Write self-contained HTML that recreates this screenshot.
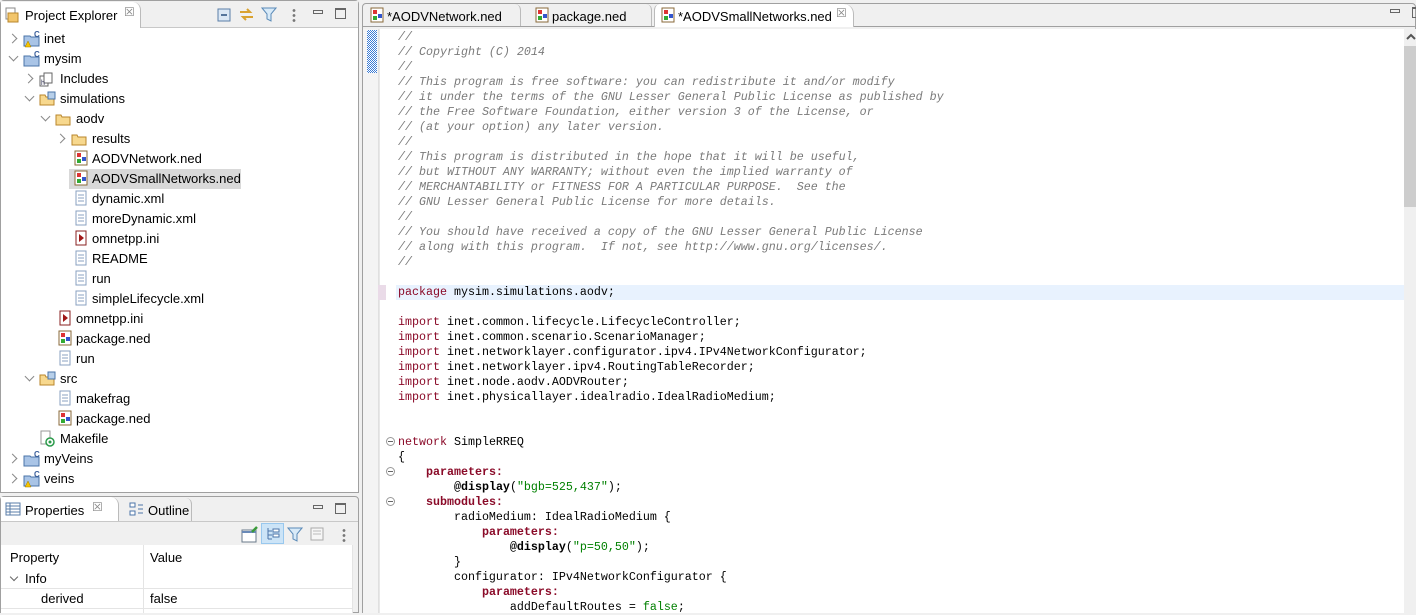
<!DOCTYPE html>
<html><head><meta charset="utf-8"><style>
*{margin:0;padding:0;box-sizing:border-box}
body{width:1416px;height:613px;overflow:hidden;background:#f0f0f0;font-family:"Liberation Sans","Noto Sans CJK SC",sans-serif;font-size:13px;color:#000;position:relative}
.abs{position:absolute}
.row{position:absolute;height:20px;line-height:22px;white-space:nowrap}
.chev{position:absolute;width:7px;height:7px;border-right:1.5px solid #888;border-bottom:1.5px solid #888}
.code{position:absolute;left:398px;top:30px;font-family:"Liberation Mono",monospace;font-size:11.67px;line-height:15px;white-space:pre;color:#000}
.c{color:#7a7a7a;font-style:italic}
.k{color:#8a0a28;font-weight:bold}
.kn{color:#8a0a28}
.s{color:#008000}
.fold{position:absolute;left:386px;width:9px;height:9px;border:1px solid #999;border-radius:50%;background:#fff}
.fold:after{content:"";position:absolute;left:1px;top:3px;width:5px;height:1px;background:#666}
</style></head><body>

<!-- Left project explorer -->
<div class="abs" style="left:0;top:0;width:359px;height:493px;border:1px solid #a0a0a0;border-radius:4px 4px 0 0;background:#fff"></div>
<div class="abs" style="left:1px;top:1px;width:357px;height:27px;background:#f0f0f0;border-bottom:1px solid #c8c8c8"></div>
<div class="abs" style="left:1px;top:2px;width:140px;height:26px;background:#fff;border-right:1px solid #bbb;border-radius:0 8px 0 0"></div>
<svg class="abs" style="left:5px;top:7px" width="16" height="16"><rect x="1" y="1" width="9" height="11" fill="#fff" stroke="#888"/><path d="M3 6h10v9H3z" fill="#f2c56b" stroke="#b8862b"/></svg>
<div class="abs" style="left:25px;top:8px;line-height:16px">Project Explorer</div>
<div class="abs" style="left:124px;top:5px;color:#888;font-size:12px">&#x2612;</div>
<svg class="abs" style="left:216px;top:7px" width="16" height="16"><rect x="2" y="2" width="12" height="12" fill="#dce8f5" stroke="#5a7ea8"/><path d="M5 8h6" stroke="#2a4f7f" stroke-width="1.5"/></svg>
<svg class="abs" style="left:238px;top:6px" width="18" height="18"><path d="M2 6h10l-3-3M15 11H5l3 3" stroke="#d9a230" stroke-width="2" fill="none"/></svg>
<svg class="abs" style="left:261px;top:6px" width="16" height="16"><path d="M1 2h14l-5 6v7l-4-2V8z" fill="#d8eaf8" stroke="#5a8ab8"/></svg>
<div class="abs" style="left:292px;top:8px;width:4px;height:14px;background:radial-gradient(circle,#777 1.2px,transparent 1.6px) 0 0/4px 5px"></div>
<div class="abs" style="left:313px;top:10px;width:10px;height:4px;border:1px solid #666"></div>
<div class="abs" style="left:335px;top:8px;width:11px;height:11px;border:1px solid #666;border-top-width:2px"></div>

<!-- tree -->
<div class="chev" style="left:9px;top:35px;transform:rotate(-45deg)"></div>
<svg class="abs" style="left:23px;top:30px" width="18" height="18"><path d="M1 6h6l1 1h8v9H1z" fill="#a9c4e6" stroke="#4b74a8"/><text x="11" y="7" font-size="8" fill="#3a5f9a" font-weight="bold" font-family="Liberation Sans">C</text><path d="M2 17l3-6 3 6z" fill="#f5c400" stroke="#a07a00" stroke-width=".5"/></svg>
<div class="row" style="left:44px;top:28px">inet</div>
<div class="chev" style="left:10px;top:53px;transform:rotate(45deg)"></div>
<svg class="abs" style="left:23px;top:50px" width="18" height="18"><path d="M1 6h6l1 1h8v9H1z" fill="#a9c4e6" stroke="#4b74a8"/><text x="11" y="7" font-size="8" fill="#3a5f9a" font-weight="bold" font-family="Liberation Sans">C</text></svg>
<div class="row" style="left:44px;top:48px">mysim</div>
<div class="chev" style="left:25px;top:75px;transform:rotate(-45deg)"></div>
<svg class="abs" style="left:39px;top:70px" width="17" height="17"><rect x="1" y="6" width="8" height="10" fill="#fff" stroke="#666"/><rect x="5" y="3" width="8" height="10" fill="#fff" stroke="#666"/><text x="2" y="15" font-size="7" font-family="Liberation Sans" fill="#335">h</text></svg>
<div class="row" style="left:60px;top:68px">Includes</div>
<div class="chev" style="left:26px;top:93px;transform:rotate(45deg)"></div>
<svg class="abs" style="left:39px;top:90px" width="18" height="18"><path d="M1 5h5l1 2h8v8H1z" fill="#f7d88e" stroke="#b8862b"/><rect x="9" y="2" width="7" height="7" fill="#b7cfe9" stroke="#4b74a8"/></svg>
<div class="row" style="left:60px;top:88px">simulations</div>
<div class="chev" style="left:42px;top:113px;transform:rotate(45deg)"></div>
<svg class="abs" style="left:55px;top:110px" width="18" height="18"><path d="M1 5h5l1 2h8v8H1z" fill="#f7d88e" stroke="#b8862b"/></svg>
<div class="row" style="left:76px;top:108px">aodv</div>
<div class="chev" style="left:57px;top:135px;transform:rotate(-45deg)"></div>
<svg class="abs" style="left:71px;top:130px" width="18" height="18"><path d="M1 5h5l1 2h8v8H1z" fill="#f7d88e" stroke="#b8862b"/></svg>
<div class="row" style="left:92px;top:128px">results</div>
<div class="abs" style="left:69px;top:169px;width:172px;height:20px;background:#d9d9d9"></div>
<div class="row" style="left:92px;top:148px">AODVNetwork.ned</div>
<div class="row" style="left:92px;top:168px">AODVSmallNetworks.ned</div>
<div class="row" style="left:92px;top:188px">dynamic.xml</div>
<div class="row" style="left:92px;top:208px">moreDynamic.xml</div>
<div class="row" style="left:92px;top:228px">omnetpp.ini</div>
<div class="row" style="left:92px;top:248px">README</div>
<div class="row" style="left:92px;top:268px">run</div>
<div class="row" style="left:92px;top:288px">simpleLifecycle.xml</div>
<div class="row" style="left:76px;top:308px">omnetpp.ini</div>
<div class="row" style="left:76px;top:328px">package.ned</div>
<div class="row" style="left:76px;top:348px">run</div>
<div class="chev" style="left:26px;top:373px;transform:rotate(45deg)"></div>
<svg class="abs" style="left:39px;top:370px" width="18" height="18"><path d="M1 5h5l1 2h8v8H1z" fill="#f7d88e" stroke="#b8862b"/><rect x="9" y="2" width="7" height="7" fill="#b7cfe9" stroke="#4b74a8"/></svg>
<div class="row" style="left:60px;top:368px">src</div>
<div class="row" style="left:76px;top:388px">makefrag</div>
<div class="row" style="left:76px;top:408px">package.ned</div>
<svg class="abs" style="left:39px;top:430px" width="18" height="18"><rect x="2" y="1" width="9" height="13" fill="#fff" stroke="#999"/><circle cx="11" cy="12" r="4" fill="#fff" stroke="#2a9a4a" stroke-width="1.5"/><circle cx="11" cy="12" r="1.5" fill="#2a9a4a"/></svg>
<div class="row" style="left:60px;top:428px">Makefile</div>
<div class="chev" style="left:9px;top:455px;transform:rotate(-45deg)"></div>
<svg class="abs" style="left:23px;top:450px" width="18" height="18"><path d="M1 6h6l1 1h8v9H1z" fill="#a9c4e6" stroke="#4b74a8"/><text x="11" y="7" font-size="8" fill="#3a5f9a" font-weight="bold" font-family="Liberation Sans">C</text></svg>
<div class="row" style="left:44px;top:448px">myVeins</div>
<div class="chev" style="left:9px;top:475px;transform:rotate(-45deg)"></div>
<svg class="abs" style="left:23px;top:470px" width="18" height="18"><path d="M1 6h6l1 1h8v9H1z" fill="#a9c4e6" stroke="#4b74a8"/><text x="11" y="7" font-size="8" fill="#3a5f9a" font-weight="bold" font-family="Liberation Sans">C</text><path d="M2 17l3-6 3 6z" fill="#f5c400" stroke="#a07a00" stroke-width=".5"/></svg>
<div class="row" style="left:44px;top:468px">veins</div>

<!-- file icons -->
<svg width="0" height="0" style="position:absolute"><defs>
<g id="ned"><rect x="2" y="1" width="12" height="14" fill="#fff" stroke="#8a6a3a"/><rect x="4" y="3" width="4" height="4" fill="#d33"/><rect x="4" y="9" width="4" height="4" fill="#3a3"/><rect x="9" y="7" width="4" height="4" fill="#35c"/></g>
<g id="txt"><rect x="3" y="1" width="10" height="14" fill="#fff" stroke="#8aa0c0"/><path d="M5 5h6M5 8h6M5 11h6" stroke="#8aa0c0"/></g>
<g id="ini"><rect x="3" y="1" width="10" height="14" fill="#fff" stroke="#8a2020"/><path d="M6 4l5 4-5 4z" fill="#a01818"/></g>
</defs></svg>
<svg class="abs" style="left:73px;top:150px" width="16" height="16"><use href="#ned"/></svg>
<svg class="abs" style="left:73px;top:170px" width="16" height="16"><use href="#ned"/></svg>
<svg class="abs" style="left:73px;top:190px" width="16" height="16"><use href="#txt"/></svg>
<svg class="abs" style="left:73px;top:210px" width="16" height="16"><use href="#txt"/></svg>
<svg class="abs" style="left:73px;top:230px" width="16" height="16"><use href="#ini"/></svg>
<svg class="abs" style="left:73px;top:250px" width="16" height="16"><use href="#txt"/></svg>
<svg class="abs" style="left:73px;top:270px" width="16" height="16"><use href="#txt"/></svg>
<svg class="abs" style="left:73px;top:290px" width="16" height="16"><use href="#txt"/></svg>
<svg class="abs" style="left:57px;top:310px" width="16" height="16"><use href="#ini"/></svg>
<svg class="abs" style="left:57px;top:330px" width="16" height="16"><use href="#ned"/></svg>
<svg class="abs" style="left:57px;top:350px" width="16" height="16"><use href="#txt"/></svg>
<svg class="abs" style="left:57px;top:390px" width="16" height="16"><use href="#txt"/></svg>
<svg class="abs" style="left:57px;top:410px" width="16" height="16"><use href="#ned"/></svg>

<!-- Properties panel -->
<div class="abs" style="left:0;top:496px;width:359px;height:117px;border:1px solid #a0a0a0;border-radius:4px 4px 0 0;background:#f0f0f0"></div>
<div class="abs" style="left:1px;top:497px;width:118px;height:24px;background:#fff;border-right:1px solid #bbb;border-radius:0 8px 0 0"></div>
<div class="abs" style="left:120px;top:498px;width:72px;height:23px;border-right:1px solid #bbb;border-radius:0 6px 0 0"></div>
<div class="abs" style="left:1px;top:521px;width:357px;height:1px;background:#c8c8c8"></div>
<svg class="abs" style="left:5px;top:502px" width="16" height="14"><rect x="1" y="1" width="14" height="12" fill="#fff" stroke="#5a7ea8"/><path d="M1 4h14M1 7h14M1 10h14M5 1v12" stroke="#5a7ea8"/></svg>
<div class="abs" style="left:25px;top:503px;line-height:16px">Properties</div>
<div class="abs" style="left:92px;top:500px;color:#888;font-size:12px">&#x2612;</div>
<svg class="abs" style="left:129px;top:502px" width="16" height="16"><rect x="1" y="1" width="5" height="4" fill="#fff" stroke="#4b74a8"/><rect x="1" y="9" width="5" height="4" fill="#fff" stroke="#4b74a8"/><path d="M9 3h5M9 7h5M9 11h5" stroke="#4b74a8"/></svg>
<div class="abs" style="left:148px;top:503px;line-height:16px">Outline</div>
<div class="abs" style="left:313px;top:505px;width:10px;height:4px;border:1px solid #666"></div>
<div class="abs" style="left:335px;top:503px;width:11px;height:11px;border:1px solid #666;border-top-width:2px"></div>
<svg class="abs" style="left:241px;top:526px" width="18" height="18"><rect x="1" y="4" width="14" height="12" fill="#fff" stroke="#6a7a8a"/><path d="M1 6h14" stroke="#6a8ab8" stroke-width="2"/><path d="M11 6l5-5" stroke="#3a9a3a" stroke-width="2.5"/></svg>
<div class="abs" style="left:261px;top:523px;width:23px;height:21px;background:#cce4f7;border:1px solid #99c8ee"></div>
<svg class="abs" style="left:265px;top:526px" width="16" height="16"><path d="M3 2v11M3 5h4M3 9h4M3 13h4" stroke="#4b74a8" fill="none"/><rect x="8" y="3" width="6" height="3" fill="#fff" stroke="#4b74a8"/><rect x="8" y="8" width="6" height="3" fill="#fff" stroke="#4b74a8"/></svg>
<svg class="abs" style="left:287px;top:526px" width="16" height="16"><path d="M1 2h14l-5 6v7l-4-2V8z" fill="#d8eaf8" stroke="#5a8ab8"/></svg>
<svg class="abs" style="left:310px;top:526px" width="16" height="16"><rect x="1" y="2" width="12" height="12" fill="#f6f6f6" stroke="#aaa"/><path d="M3 5h8M3 8h8" stroke="#bbb"/></svg>
<div class="abs" style="left:342px;top:528px;width:4px;height:14px;background:radial-gradient(circle,#777 1.2px,transparent 1.6px) 0 0/4px 5px"></div>
<div class="abs" style="left:1px;top:545px;width:351px;height:68px;background:#fff"></div>
<div class="abs" style="left:143px;top:545px;width:1px;height:68px;background:#e4e4e4"></div>
<div class="abs" style="left:352px;top:545px;width:1px;height:68px;background:#e4e4e4"></div>
<div class="abs" style="left:1px;top:588px;width:351px;height:1px;background:#e4e4e4"></div>
<div class="abs" style="left:1px;top:608px;width:351px;height:1px;background:#e4e4e4"></div>
<div class="row" style="left:10px;top:547px">Property</div>
<div class="row" style="left:150px;top:547px">Value</div>
<div class="chev" style="left:11px;top:574px;transform:rotate(45deg);border-color:#666;width:6px;height:6px"></div>
<div class="row" style="left:25px;top:568px">Info</div>
<div class="row" style="left:41px;top:588px">derived</div>
<div class="row" style="left:150px;top:588px">false</div>

<!-- Editor -->
<div class="abs" style="left:362px;top:3px;width:1054px;height:610px;border:1px solid #a0a0a0;border-radius:4px 4px 0 0;background:#f0f0f0"></div>
<div class="abs" style="left:363px;top:26px;width:1053px;height:1px;background:#a0a0a0"></div>
<div class="abs" style="left:363px;top:4px;width:158px;height:22px;border-right:1px solid #bbb;border-radius:0 6px 0 0"></div>
<div class="abs" style="left:522px;top:4px;width:130px;height:22px;border-right:1px solid #bbb;border-radius:0 6px 0 0"></div>
<div class="abs" style="left:654px;top:4px;width:200px;height:23px;background:#fff;border-left:1px solid #bbb;border-right:1px solid #bbb;border-radius:6px 10px 0 0"></div>
<svg class="abs" style="left:369px;top:7px" width="16" height="16"><use href="#ned"/></svg>
<div class="abs" style="left:387px;top:9px;line-height:16px">*AODVNetwork.ned</div>
<svg class="abs" style="left:534px;top:7px" width="16" height="16"><use href="#ned"/></svg>
<div class="abs" style="left:552px;top:9px;line-height:16px">package.ned</div>
<svg class="abs" style="left:660px;top:7px" width="16" height="16"><use href="#ned"/></svg>
<div class="abs" style="left:678px;top:9px;line-height:16px">*AODVSmallNetworks.ned</div>
<div class="abs" style="left:836px;top:6px;color:#888;font-size:12px">&#x2612;</div>
<div class="abs" style="left:1390px;top:9px;width:10px;height:4px;border:1px solid #666"></div>
<div class="abs" style="left:1412px;top:7px;width:11px;height:11px;border:1px solid #666;border-top-width:2px"></div>

<div class="abs" style="left:363px;top:29px;width:1041px;height:584px;background:#fff"></div>
<div class="abs" style="left:363px;top:29px;width:16px;height:584px;background:#f4f4f4;border-right:1px solid #e0e0e0"></div>
<div class="abs" style="left:367px;top:30px;width:10px;height:43px;background:repeating-conic-gradient(#3a7bd5 0 25%,#fff 0 50%) 0 0/2px 2px"></div>
<div class="abs" style="left:379px;top:29px;width:1px;height:584px;background:#e8e8e8"></div>
<div class="abs" style="left:378px;top:285px;width:8px;height:15px;background:#eadbe8"></div>
<div class="abs" style="left:396px;top:285px;width:1008px;height:15px;background:#e8f2fe"></div>
<div class="abs" style="left:1404px;top:29px;width:12px;height:584px;background:#f0f0f0"></div>
<div class="abs" style="left:1404px;top:46px;width:12px;height:161px;background:#cdcdcd"></div>
<svg class="abs" style="left:1406px;top:33px" width="10" height="8"><path d="M1 6l4-4 4 4" stroke="#555" stroke-width="2" fill="none"/></svg>

<div class="fold" style="top:437px"></div>
<div class="fold" style="top:467px"></div>
<div class="fold" style="top:497px"></div>

<div class="code"><span class="c">//
// Copyright (C) 2014
//
// This program is free software: you can redistribute it and/or modify
// it under the terms of the GNU Lesser General Public License as published by
// the Free Software Foundation, either version 3 of the License, or
// (at your option) any later version.
//
// This program is distributed in the hope that it will be useful,
// but WITHOUT ANY WARRANTY; without even the implied warranty of
// MERCHANTABILITY or FITNESS FOR A PARTICULAR PURPOSE.  See the
// GNU Lesser General Public License for more details.
//
// You should have received a copy of the GNU Lesser General Public License
// along with this program.  If not, see http://www.gnu.org/licenses/.
//</span>

<span class="kn">package</span> mysim.simulations.aodv;

<span class="kn">import</span> inet.common.lifecycle.LifecycleController;
<span class="kn">import</span> inet.common.scenario.ScenarioManager;
<span class="kn">import</span> inet.networklayer.configurator.ipv4.IPv4NetworkConfigurator;
<span class="kn">import</span> inet.networklayer.ipv4.RoutingTableRecorder;
<span class="kn">import</span> inet.node.aodv.AODVRouter;
<span class="kn">import</span> inet.physicallayer.idealradio.IdealRadioMedium;


<span class="kn">network</span> SimpleRREQ
{
    <span class="k">parameters:</span>
        <b>@display</b>(<span class="s">"bgb=525,437"</span>);
    <span class="k">submodules:</span>
        radioMedium: IdealRadioMedium {
            <span class="k">parameters:</span>
                <b>@display</b>(<span class="s">"p=50,50"</span>);
        }
        configurator: IPv4NetworkConfigurator {
            <span class="k">parameters:</span>
                addDefaultRoutes = <span class="s">false</span>;</div>
</body></html>
